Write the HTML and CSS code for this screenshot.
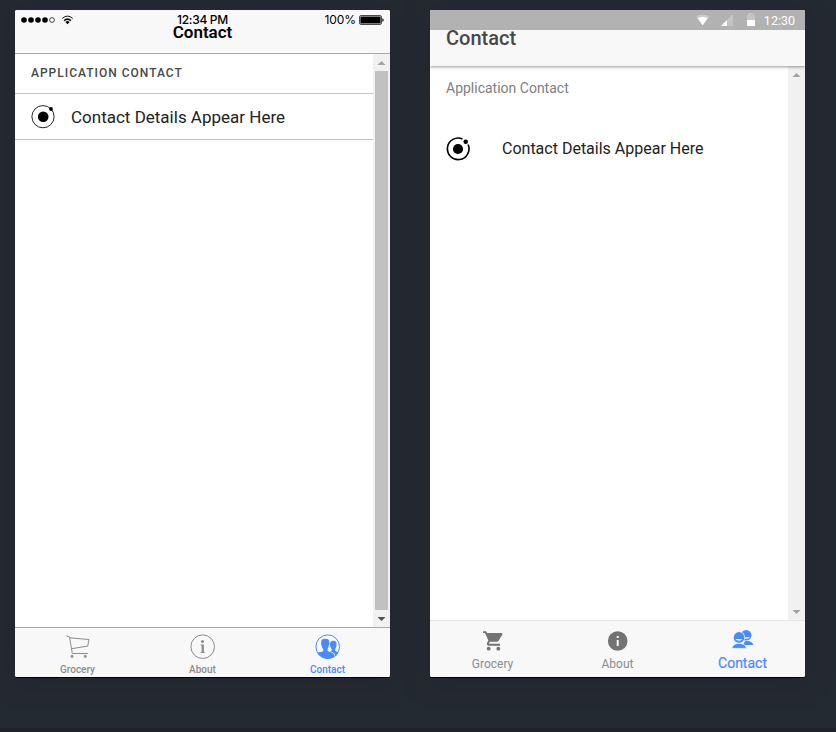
FILE: index.html
```html
<!DOCTYPE html>
<html lang="en">
<head>
<meta charset="utf-8">
<title>Contact</title>
<link rel="stylesheet" href="styles.css">
</head>
<body>
<main class="stage">
  <section class="phone ios">
    <div class="status">
      <div class="status-left">
        <svg width="56" height="12" viewBox="0 0 56 12"><g><circle cx="3" cy="6" r="2.8"/><circle cx="10" cy="6" r="2.8"/><circle cx="17" cy="6" r="2.8"/><circle cx="24" cy="6" r="2.8"/><circle cx="31" cy="6" r="2.4" fill="none" stroke="#000" stroke-width=".7"/></g><g fill="none" stroke="#000"><path d="M41.2 4.4Q46.5-.2 51.8 4.4" stroke-width=".9"/><path d="M43.1 6.6Q46.5 3.7 49.9 6.6" stroke-width="1.5"/></g><path d="M44.4 7.9Q46.5 6.3 48.6 7.9L46.5 10.2Z"/></svg>
      </div>
      <span class="clock">12:34 PM</span>
      <div class="status-right"><span>100%</span><svg width="25" height="10" viewBox="0 0 25 10"><rect x=".5" y=".5" width="22" height="9" rx="1.6" fill="none" stroke="#000" stroke-width=".7"/><rect x="1.4" y="1.4" width="20.2" height="7.2" rx=".6"/><path d="M23.4 3.2Q24.7 3.6 24.7 5T23.4 6.8Z"/></svg></div>
    </div>
    <header class="toolbar"><h1>Contact</h1></header>
    <div class="body">
      <div class="content">
        <h2 class="list-header">Application Contact</h2>
        <div class="item"><svg class="item-icon" width="24" height="24" viewBox="0 0 24 24"><circle cx="12" cy="11.7" r="11.1" fill="none" stroke="#111" stroke-width=".9"/><circle cx="12.2" cy="11.7" r="5.3"/><circle cx="20" cy="4" r="1.9"/></svg><span>Contact Details Appear Here</span></div>
      </div>
      <div class="scroll"><svg class="arrow" width="17" height="17" viewBox="0 0 17 17"><path d="M4.5 11L8.5 7L12.5 11Z" fill="#a3a3a3"/></svg><i class="thumb"></i><svg class="arrow" width="17" height="17" viewBox="0 0 17 17"><path d="M4.5 7L8.5 11L12.5 7Z" fill="#505050"/></svg></div>
    </div>
    <nav class="tabs">
      <a class="tab"><svg width="26" height="26" viewBox="0 0 26 26" fill="none" stroke="#8c8c8c" stroke-width="1"><path d="M1.5 1.9L4.5 2.9L7.3 19.5H22.8M4.8 3.8L24 5.5L22.7 12.1L6.5 14.7"/><circle cx="7" cy="22.4" r="1.1" fill="#aaa"/><circle cx="20.3" cy="22.4" r="1.1" fill="#aaa"/></svg><span>Grocery</span></a>
      <a class="tab"><svg width="26" height="26" viewBox="0 0 26 26"><circle cx="12.7" cy="12.7" r="11.8" fill="none" stroke="#8c8c8c"/><circle cx="12.5" cy="7.6" r="1.5" fill="#8c8c8c"/><path d="M10.5 10.4H13.9V18L15 18.4V19H10.5V18.4L11.6 18V11.5L10.5 11.2Z" fill="#8c8c8c"/></svg><span>About</span></a>
      <a class="tab active"><svg width="26" height="26" viewBox="0 0 26 26"><circle cx="12.7" cy="12.7" r="11.8" fill="none" stroke="#488aff"/><path d="M2.4 18.8C4.5 18 8.1 17.8 8.2 16.7V15C7 13.8 6.7 12.2 6.5 10.9C5.8 10.4 5.9 8.8 6.3 8.7C5.8 5.8 7.4 4.5 10.3 4.7C13.4 4.6 14.6 6 14.1 8.7C14.6 9 14.5 10.4 13.9 10.9C13.7 12.4 13.5 13.9 12.5 15V16.6C13.3 18 17.2 18.3 18.7 20C19.5 21 19.3 22.6 19.2 23C13.5 26.4 5.4 24.8 2.4 18.8Z" fill="#488aff"/><path d="M15 10.6C14.7 7.9 15.9 6.7 18.3 6.7C20.7 6.7 21.9 8 21.4 10.8C21.8 12 21.2 12.5 20.9 13.2C20.7 14.5 20 15.2 20 16.5C20.6 17.4 22.1 17.7 23.3 18.4C22.5 20.2 21.5 21.6 20.4 22.4C20.2 20 18.5 18.1 14.3 17.1C15.9 17 16.9 16.8 16.8 15.6C16.1 14.8 15.8 13.8 15.6 13C14.8 12.4 14.8 11.2 15 10.6Z" fill="#488aff"/></svg><span>Contact</span></a>
    </nav>
  </section>
  <section class="phone android">
    <div class="status"><svg width="60" height="14" viewBox="0 0 60 14" fill="#fff"><path d="M0 4Q6.7-.8 13.4 4L6.7 12.5Z" fill-opacity=".3"/><path d="M1.7 5.2Q6.7 2.2 11.7 5.2L6.7 12.2Z"/><path d="M25 13H37V1Z" fill-opacity=".25"/><path d="M25 13H31V7Z"/><path d="M51 1.4H52.5V0H57V1.4H59V7H51Z" fill-opacity=".25"/><path d="M51 7H59V13H51Z"/></svg><span>12:30</span></div>
    <header class="toolbar"><h1>Contact</h1></header>
    <div class="body">
      <div class="content">
        <h2 class="list-header">Application Contact</h2>
        <div class="item"><svg class="item-icon" width="24" height="24" viewBox="0 0 24 24"><path d="M16.5 1.9A10.8 10.8 0 1 0 22.1 7.5" fill="none" stroke="#000" stroke-width="1.6"/><circle cx="12" cy="12" r="5.1"/><circle cx="19.7" cy="4.8" r="2.3"/></svg><span>Contact Details Appear Here</span></div>
      </div>
      <div class="scroll"><svg class="arrow" width="17" height="17" viewBox="0 0 17 17"><path d="M4.5 11L8.5 7L12.5 11Z" fill="#a3a3a3"/></svg><svg class="arrow" width="17" height="17" viewBox="0 0 17 17"><path d="M4.5 7L8.5 11L12.5 7Z" fill="#a3a3a3"/></svg></div>
    </div>
    <nav class="tabs">
      <a class="tab"><svg width="24" height="24" viewBox="0 0 24 24" fill="#737373"><path d="M2 2.2V4.1H3.9L7.4 11.4L6.1 13.7C5.4 15 6.3 16.7 7.9 16.7H19.1V14.8H8.3L8 14.3L8.9 12.8H15.9C16.6 12.8 17.2 12.4 17.6 11.8L21.4 5.4C21.7 4.8 21.2 4.1 20.6 4.1H6.1L5.2 2.2Z"/><circle cx="7.7" cy="19.7" r="1.9"/><circle cx="17.3" cy="19.7" r="1.9"/></svg><span>Grocery</span></a>
      <a class="tab"><svg width="24" height="24" viewBox="0 0 24 24"><circle cx="11.7" cy="12" r="9.8" fill="#737373"/><path d="M10.7 7H12.7V9H10.7ZM10.7 11H12.7V17H10.7Z" fill="#f8f8f8"/></svg><span>About</span></a>
      <a class="tab active"><svg width="24" height="24" viewBox="0 0 24 24" fill="#488aff"><circle cx="15.2" cy="7.2" r="5.3"/><path d="M14.2 9.2H19Q18.2 10.8 14.2 10.8Z" fill="#f8f8f8"/><path d="M12 17L14 13.2C18 12.4 21.2 13.5 22.5 17Z"/><circle cx="8" cy="9.4" r="6" fill="#f8f8f8"/><circle cx="8" cy="9.4" r="5.3"/><path d="M4.4 10.9H11.6Q11 12.6 8 12.7Q5 12.6 4.4 10.9Z" fill="#f8f8f8"/><path d="M.8 20.4C1.6 16.8 4.4 15.4 8 15.4S14.9 16.8 15.5 20.4Z" stroke="#f8f8f8" stroke-width=".8"/></svg><span>Contact</span></a>
    </nav>
  </section>
</main>
</body>
</html>
```

FILE: styles.css
```css
* { box-sizing: border-box; }
body {
  margin: 0;
  height: 732px;
  overflow: hidden;
  background: #242a32;
  font-family: Roboto, sans-serif;
}
.stage { display: flex; gap: 40px; height: 732px; padding: 10px 15px; border-bottom: 4px solid #1f222c; }
.phone {
  position: relative;
  display: flex;
  flex-direction: column;
  flex: none;
  width: 375px;
  height: 667px;
  background: #fff;
  border-radius: 2px;
  overflow: hidden;
  box-shadow: 0 1px 0 #000, 0 3px 24px rgba(35, 32, 42, .6);
}
.status { position: absolute; z-index: 2; top: 0; left: 0; right: 0; height: 20px; display: flex; align-items: center; }
h1, h2 { margin: 0; }
svg { display: block; flex: none; }
.toolbar { flex: none; display: flex; background: #f8f8f8; }
.body { flex: 1; min-height: 0; display: flex; }
.content { flex: 1; }
.scroll { width: 17px; background: #f1f1f1; display: flex; flex-direction: column; justify-content: space-between; }
.thumb { flex: 1; margin: 0 2px; background: #c1c1c1; }
.item { display: flex; align-items: center; white-space: nowrap; color: #222; }
.tabs { flex: none; display: flex; background: #f8f8f8; }
.tab { flex: 1; display: flex; flex-direction: column; align-items: center; }

.ios .status { justify-content: space-between; padding: 0 6px; font: 500 12px/20px Inter, sans-serif; letter-spacing: -.3px; }
.ios .status-left, .ios .status-right { flex: 1; display: flex; align-items: center; }
.ios .status-right { justify-content: flex-end; gap: 3px; font-weight: 400; letter-spacing: -.1px; }
.ios .clock { font-weight: 500; }
.ios .toolbar { height: 44px; justify-content: center; border-bottom: 1px solid #a7a7a7; }
.ios h1 { font-size: 17px; font-weight: 600; line-height: 44px; }
.ios .list-header { height: 40px; padding-left: 16px; border-bottom: 1px solid #c4c4c4; font-size: 12px; font-weight: 500; line-height: 38px; letter-spacing: 1px; color: #484848; text-transform: uppercase; }
.ios .item { height: 46px; padding-left: 16px; gap: 16px; border-bottom: 1px solid #c4c4c4; font-size: 17px; font-weight: 400; }
.ios .tabs { height: 50px; border-top: 1px solid #a7a7a7; }
.ios .tab { padding-top: 6px; font-size: 10px; font-weight: 500; line-height: 12px; color: #8c8c8c; gap: 4px; }

.android .status { justify-content: flex-end; gap: 8px; padding-right: 10px; background: #b2b2b2; color: #fff; font-size: 12.5px; }
.android .toolbar { height: 56px; padding-left: 16px; position: relative; box-shadow: 0 1px 3px rgba(0, 0, 0, .4); }
.android h1 { font-size: 20px; font-weight: 500; line-height: 56px; color: #484848; }
.android .list-header { height: 45px; padding-left: 16px; font-size: 14px; font-weight: 400; line-height: 44px; color: #808080; }
.android .item { height: 45px; margin-top: 15px; padding-left: 16px; gap: 32px; font-size: 16px; }
.android .tabs { height: 57px; border-top: 1px solid #e5e5e5; }
.android .tab { padding-top: 8px; gap: 4px; font-size: 12px; line-height: 14px; color: #8c8c8c; }
.ios .tab.active, .android .tab.active { color: #488aff; }
.android .tab.active { padding-top: 7px; gap: 4px; font-size: 14px; -webkit-text-stroke: .2px #488aff; }
```
